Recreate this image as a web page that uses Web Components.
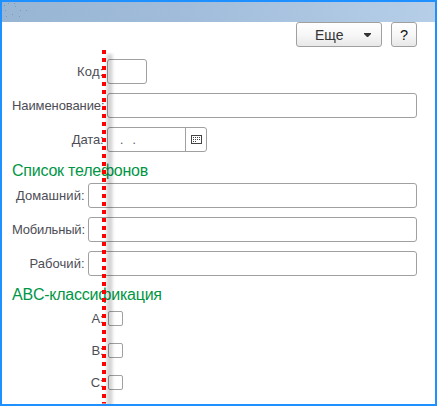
<!DOCTYPE html>
<html lang="ru"><head><meta charset="utf-8"><title>Форма</title>
<style>body{margin:0;font-family:"Liberation Sans",Arial,sans-serif}</style></head>
<body>
<form-window>
  <tool-bar slot="tools"><tool-button menu>Еще</tool-button><tool-button>?</tool-button></tool-bar>
  <form-group style="--label:93px;--top:12px">
    <form-field label="Код:" fixed style="--w:40px;--tracking:.2px"></form-field>
    <form-field label="Наименование:"></form-field>
    <form-field label="Дата:" date fixed style="--w:100px">.&nbsp;&nbsp;.</form-field>
  </form-group>
  <form-group heading="Список телефонов" style="--label:74px;--top:9px;--after:2px">
    <form-field label="Домашний:" style="--tracking:0.05px"></form-field>
    <form-field label="Мобильный:" style="--tracking:-.18px"></form-field>
    <form-field label="Рабочий:" style="--tracking:.05px"></form-field>
  </form-group>
  <form-group heading="ABC-классификация" style="--label:93px;--top:9px;--gap:17px;--after:6px">
    <check-field label="A:"></check-field>
    <check-field label="B:"></check-field>
    <check-field label="C:"></check-field>
  </form-group>
  <guide-line slot="overlay"></guide-line>
</form-window>
<script>
const define = (name, markup, setup) => customElements.define(name, class extends HTMLElement {
  connectedCallback() {
    if (this.shadowRoot) return;
    const root = this.attachShadow({mode: 'open'});
    const template = document.createElement('template');
    template.innerHTML = markup;
    root.append(template.content.cloneNode(true));
    if (setup) setup(this, root);
  }
});

define('form-window', `<style>
:host{display:flex;flex-direction:column;position:relative;box-sizing:border-box;width:437px;height:406px;border:2px solid #1e90ff;background:#fff;overflow:hidden}
header{flex:none;height:20px;background:linear-gradient(90deg,#98b5d4,#a0bcda 40%,#b6cee8)}
header svg{display:block}
main{display:flex;flex-direction:column;padding:0 18px 0 10px}
</style><header><svg width="28" height="20" fill="#6b9fc5"><path d="M2 3h1v1h-1zM6 1h1v1h-1zM13 4h1v1h-1zM18 8h1v1h-1zM3 8h1v1h-1zM24 8h1v1h-1z"/><path fill="#789bb9" d="M4 14h1v1h-1zM10 12h1v1h-1zM17 14h1v1h-1zM12 1h1v1h-1z"/></svg></header><main><slot name="tools"></slot><slot></slot></main><slot name="overlay"></slot>`);

define('tool-bar', `<style>:host{display:flex;justify-content:flex-end;gap:9px}</style><slot></slot>`);

define('tool-button', `<style>
:host{display:flex;align-items:center;justify-content:center;box-sizing:border-box;width:26px;height:25px;border:1px solid #a0a0a0;border-radius:3px;background:linear-gradient(#fff,#f7f7f7 50%,#e8e8e8);color:#111;font-size:14.5px;line-height:16px}
:host([menu]){width:86px;justify-content:flex-start;padding-left:18px;color:#333;font-size:14px}
svg{display:none}:host([menu]) svg{display:block;margin:1px 9px 0 auto}
</style><slot></slot><svg width="8" height="5"><path d="M0 0h7v1L4 4H3L0 1z" fill="#333"/></svg>`);

define('form-group', `<style>
:host{display:flex;flex-direction:column;padding-top:var(--top)}
h2{margin:0 0 var(--after,3px);font-size:16px;line-height:20px;font-weight:400;letter-spacing:-.23px;color:#009646;white-space:nowrap}
h2[hidden]{display:none}
div{display:flex;flex-direction:column;gap:var(--gap,9px)}
</style><h2 hidden></h2><div><slot></slot></div>`, (el, root) => {
  const h = root.querySelector('h2');
  if (el.hasAttribute('heading')) { h.textContent = el.getAttribute('heading'); h.hidden = false; }
});

const labelStyle = `label{box-sizing:border-box;flex:none;width:var(--label);text-align:right;white-space:nowrap;font-size:13px;line-height:16px;letter-spacing:var(--tracking,-.1px);color:#4d4d55}`;

define('form-field', `<style>
:host{display:flex;gap:2px;height:25px}
${labelStyle}
label{padding:5px 1.4px 0 0}
.box{display:flex;justify-content:space-between;box-sizing:border-box;width:var(--w,auto);flex:1 1 auto;border:1px solid #a0a0a0;border-radius:3px}
:host([fixed]) .box{flex:none}
.value{padding:4px 0 0 12px;font-size:12px;line-height:16px;letter-spacing:.8px;color:#555}
.pick{display:none;width:20px;border-left:1px solid #a0a0a0;align-items:center;justify-content:center}
:host([date]) .pick{display:flex}
</style><label></label><div class="box"><span class="value"><slot></slot></span><span class="pick"><svg width="11" height="9" shape-rendering="crispEdges"><path d="M.5.5h10v8H.5z" fill="none" stroke="#444"/><path d="M2 2h1v1H2zM4 2h1v1H4zM6 2h1v1H6zM8 2h1v1H8zM2 4h1v1H2zM4 4h1v1H4zM6 4h1v1H6zM8 4h1v1H8zM2 6h1v1H2zM4 6h1v1H4z" fill="#444"/></svg></span></div>`,
  (el, root) => { root.querySelector('label').textContent = el.getAttribute('label'); });

define('check-field', `<style>
:host{display:flex;gap:3px;height:15px}
${labelStyle}
label{padding-right:1.5px;line-height:15px}
i{box-sizing:border-box;width:15px;height:15px;border:1px solid #a0a0a0;border-radius:2px}
</style><label></label><i></i>`,
  (el, root) => { root.querySelector('label').textContent = el.getAttribute('label'); });

define('guide-line', `<style>
:host{position:absolute;left:99.5px;top:47.5px;width:4px;bottom:0}
svg{display:block;overflow:visible}
</style><svg width="4" height="353"><defs><filter id="soft" filterUnits="userSpaceOnUse" x="-10" y="-6" width="30" height="370"><feGaussianBlur stdDeviation="1.5"/></filter></defs>
<path d="M7.5 4V360" stroke="#000" stroke-opacity=".17" stroke-width="6" filter="url(#soft)"/>
<path d="M2 0V353.5" stroke="red" stroke-width="4" stroke-dasharray="4 4"/></svg>`);
</script>
</body></html>
